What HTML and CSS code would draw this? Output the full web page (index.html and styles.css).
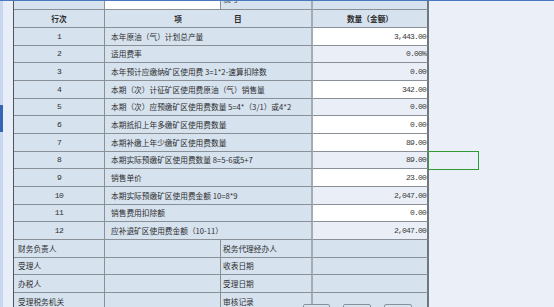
FILE: index.html
```html
<!DOCTYPE html>
<html lang="zh-CN">
<head>
<meta charset="utf-8">
<title>矿区使用费申报表</title>
<link rel="stylesheet" href="styles.css">
</head>
<body>
<div class="topline"></div>
<div class="page">
  <div class="rail"><span class="rail-tab"></span></div>
  <div class="gutter"></div>
  <div class="viewport">
    <div class="sheet">
      <div class="c"></div>
      <div class="c blank-white"></div>
      <div class="c label-r top-cut">税号</div>
      <div class="c val top-id top-cut">6100000000000001</div>

      <div class="c num head">行次</div>
      <div class="c item head head-item"><span>项</span><span>目</span></div>
      <div class="c val head head-val">数量（金额）</div>

      <div class="c num">1</div><div class="c item">本年原油（气）计划总产量</div><div class="c val input">3,443.00</div>
      <div class="c num">2</div><div class="c item">适用费率</div><div class="c val">0.00%</div>
      <div class="c num">3</div><div class="c item">本年预计应缴纳矿区使用费 3=1*2-速算扣除数</div><div class="c val">0.00</div>
      <div class="c num">4</div><div class="c item">本期（次）计征矿区使用费原油（气）销售量</div><div class="c val input">342.00</div>
      <div class="c num">5</div><div class="c item">本期（次）应预缴矿区使用费数量 5=4*（3/1）或4*2</div><div class="c val">0.00</div>
      <div class="c num">6</div><div class="c item">本期抵扣上年多缴矿区使用费数量</div><div class="c val input">0.00</div>
      <div class="c num">7</div><div class="c item">本期补缴上年少缴矿区使用费数量</div><div class="c val input">89.00</div>
      <div class="c num">8</div><div class="c item">本期实际预缴矿区使用费数量 8=5-6或5+7</div><div class="c val">89.00</div>
      <div class="c num">9</div><div class="c item">销售单价</div><div class="c val input">23.00</div>
      <div class="c num">10</div><div class="c item">本期实际预缴矿区使用费金额 10=8*9</div><div class="c val">2,047.00</div>
      <div class="c num">11</div><div class="c item">销售费用扣除额</div><div class="c val input">0.00</div>
      <div class="c num">12</div><div class="c item">应补退矿区使用费金额（10-11）</div><div class="c val">2,047.00</div>

      <div class="c label">财务负责人</div><div class="c"></div><div class="c label-r">税务代理经办人</div><div class="c end"></div>
      <div class="c label">受理人</div><div class="c"></div><div class="c label-r">收表日期</div><div class="c end"></div>
      <div class="c label">办税人</div><div class="c"></div><div class="c label-r">受理日期</div><div class="c end"></div>
      <div class="c label">受理税务机关</div><div class="c"></div><div class="c label-r">审核记录</div><div class="c end"></div>
    </div>
    <div class="selection"></div>
    <div class="toolbar">
      <span class="btn"></span><span class="btn wide"></span><span class="btn wide"></span>
    </div>
  </div>
</div>
</body>
</html>
```
FILE: styles.css
```css
html, body {
  margin: 0;
  padding: 0;
}
body {
  width: 554px;
  height: 307px;
  overflow: hidden;
  background: #eaeff8;
  font-family: "Noto Sans CJK SC", sans-serif;
  font-size: 7.7px;
  color: #2e2e2e;
}
.topline {
  height: 1px;
  background: #4a78c0;
}
.page {
  display: flex;
  height: 306px;
  overflow: hidden;
}
.rail {
  width: 3px;
  background: #c6d7ef;
  display: flex;
  flex-direction: column;
}
.rail-tab {
  margin-top: 104px;
  height: 27px;
  background: #3565b5;
}
.gutter {
  width: 10px;
  background: #e8eef8;
}
.viewport {
  flex: 1;
  position: relative;
}
.sheet {
  display: grid;
  grid-template-columns: 91px 116px 92px 116px;
  grid-template-rows: 18px 18px repeat(16, 17.67px);
  margin-top: -9px;
  width: max-content;
  border-left: 1px solid #4e555c;
}
.c {
  box-sizing: border-box;
  border-bottom: 1px solid #8a9097;
  border-right: 1px solid #8a9097;
  background: #d6e2ee;
  display: flex;
  align-items: center;
  overflow: hidden;
  white-space: nowrap;
}
.num {
  justify-content: center;
  font-family: "Liberation Mono", monospace;
  font-size: 8px;
  letter-spacing: -0.6px;
}
.item {
  grid-column: span 2;
  padding-left: 6px;
  border-right: 2px solid #a3abb3;
}
.val {
  justify-content: flex-end;
  padding-right: 1px;
  border-right: 2px solid #6f767d;
  background: #e9eef7;
  font-family: "Liberation Mono", monospace;
  font-size: 8px;
  letter-spacing: -0.8px;
  color: #3a3a3a;
}
.val.input {
  background: #ffffff;
}
.head {
  font-family: "Noto Sans CJK SC", sans-serif;
  font-size: 7.7px;
  font-weight: bold;
  letter-spacing: 0;
  justify-content: center;
  color: #2a2a2a;
}
.head-item {
  padding-left: 0;
  gap: 52px;
}
.head-val {
  background: #d6e2ee;
  padding-right: 0;
}
.blank-white {
  background: #ffffff;
}
.top-id {
  justify-content: flex-start;
  background: #d6e2ee;
  padding-left: 1px;
}
.top-cut {
  padding-bottom: 5px;
}
.label {
  padding-left: 4px;
}
.label-r {
  padding-left: 2px;
  border-right: 2px solid #a3abb3;
}
.end {
  border-right: 2px solid #6f767d;
}
.selection {
  position: absolute;
  left: 415px;
  top: 150px;
  width: 51px;
  height: 19px;
  box-sizing: border-box;
  border: 1.5px solid #2f9a34;
}
.toolbar {
  position: absolute;
  left: 290px;
  top: 303px;
  display: flex;
  gap: 13px;
}
.btn {
  width: 27px;
  height: 14px;
  box-sizing: border-box;
  border: 1px solid #8593a0;
  border-radius: 2px;
  background: #d9e3ee;
}
.btn.wide {
  width: 28px;
}
```
